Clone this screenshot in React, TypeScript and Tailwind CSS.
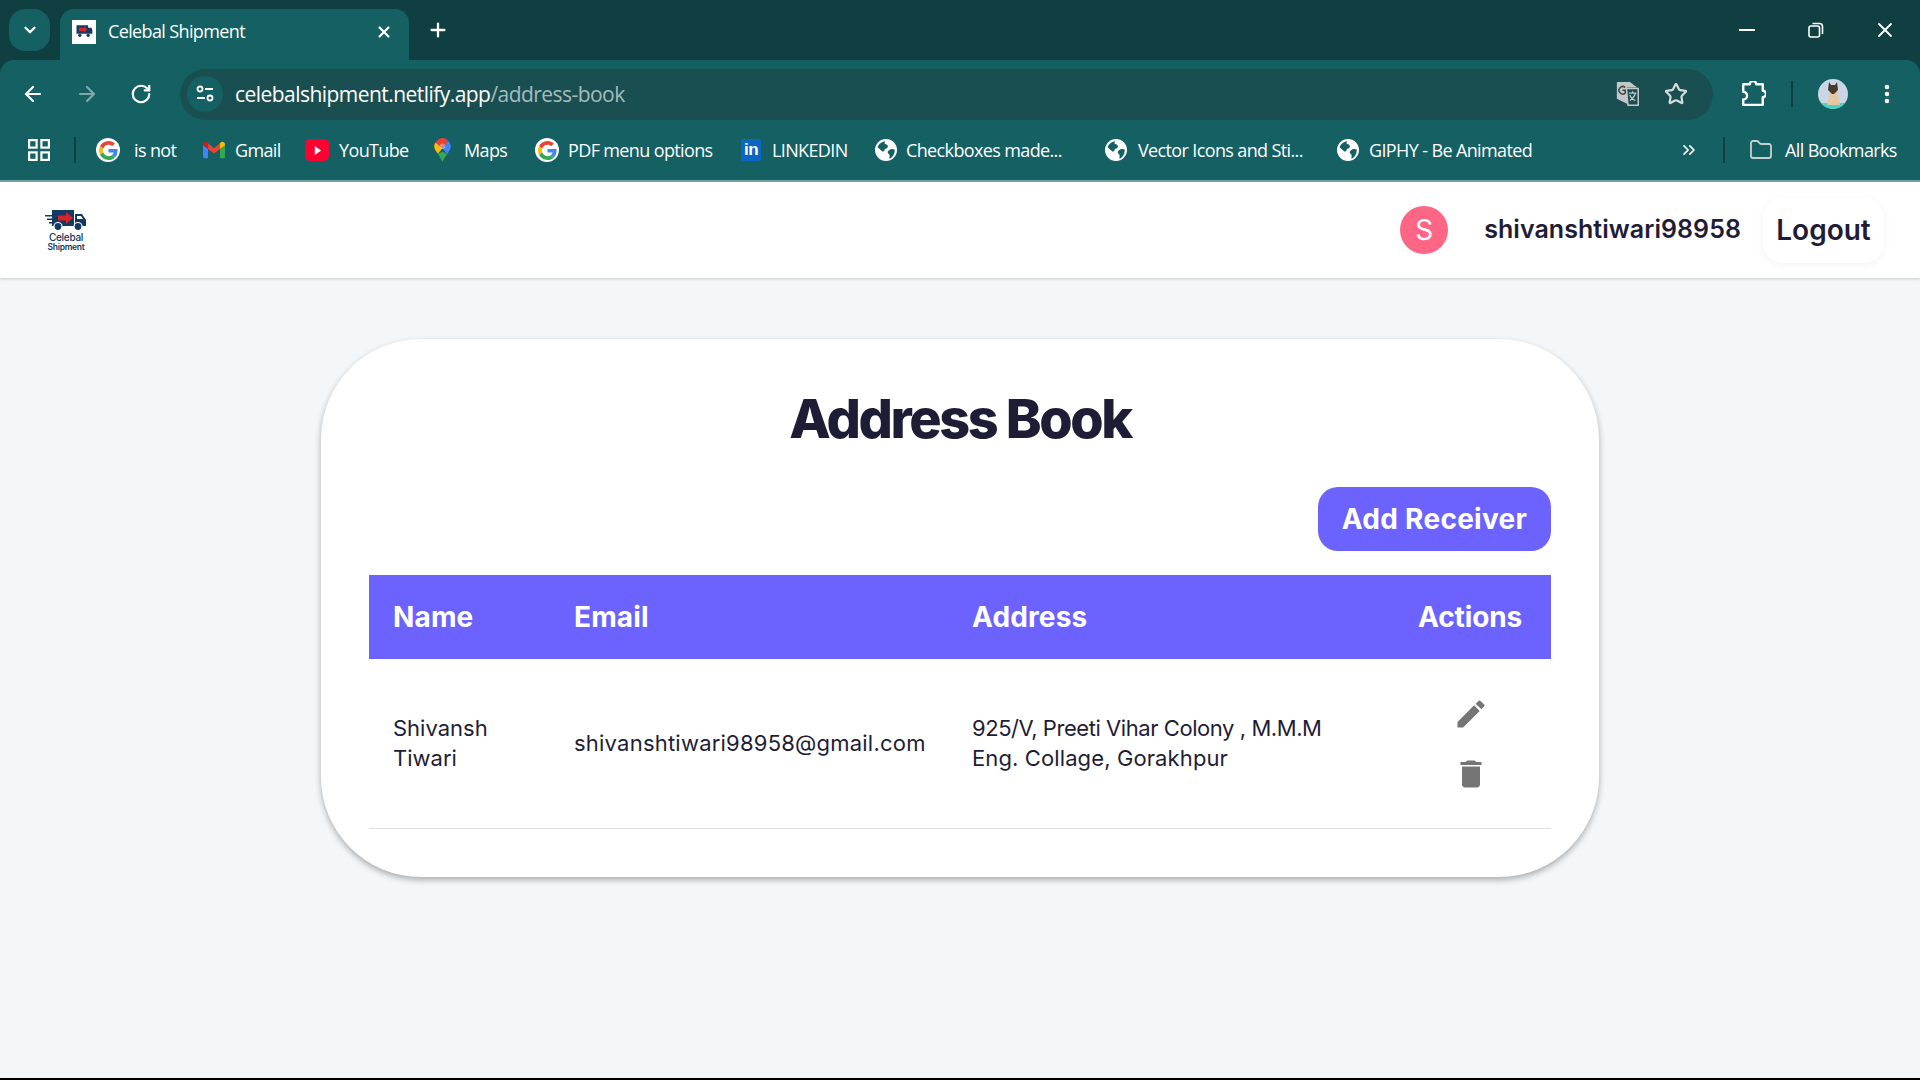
import { ArrowLeft, ArrowRight, ChevronDown, ChevronsRight, Folder, MoreVertical, Plus, RotateCw, Star, X } from "lucide-react";

const uiFont = "[font-family:'Open_Sans','Noto_Sans',sans-serif]";

const GoogleIcon = () => (
  <span className="flex h-[24px] w-[24px] items-center justify-center rounded-full bg-white">
    <svg viewBox="0 0 48 48" className="h-[19px] w-[19px]">
      <path fill="#EA4335" d="M24 9.5c3.5 0 6.700 1.200 9.200 3.600l6.900-6.900C35.900 2.400 30.500 0 24 0 14.600 0 6.500 5.400 2.600 13.200l8 6.200C12.500 13.700 17.800 9.500 24 9.500z" />
      <path fill="#4285F4" d="M46.900 24.500c0-1.600-.1-3.100-.4-4.500H24v9h12.900c-.6 3-2.200 5.500-4.700 7.200l7.700 6c4.500-4.200 7-10.300 7-17.700z" />
      <path fill="#FBBC05" d="M10.500 28.600c-.5-1.500-.8-3-.8-4.600s.3-3.100.8-4.600l-8-6.200C.9 16.500 0 20.100 0 24s.9 7.500 2.600 10.800l7.900-6.200z" />
      <path fill="#34A853" d="M24 48c6.500 0 11.900-2.100 15.900-5.800l-7.700-6c-2.200 1.400-4.900 2.300-8.200 2.300-6.200 0-11.500-4.200-13.400-9.900l-8 6.200C6.500 42.600 14.600 48 24 48z" />
    </svg>
  </span>
);

const GmailIcon = () => (
  <svg viewBox="0 0 24 18" className="h-[18px] w-[22px]">
    <path fill="#4285F4" d="M0 3v13.500A1.500 1.500 0 0 0 1.500 18H5.500V8z" />
    <path fill="#34A853" d="M18.500 8v10h4a1.500 1.500 0 0 0 1.500-1.500V3z" />
    <path fill="#EA4335" d="M5.500 8V1.500L12 7l6.500-5.500V8L12 13z" />
    <path fill="#C5221F" d="M0 3c0-2.500 3-3.800 4.800-2.200L5.500 1.500V8L0 3.800z" />
    <path fill="#FBBC04" d="M18.500 1.500l.7-.7C21 -.8 24 .5 24 3v.8L18.500 8z" />
  </svg>
);

const YoutubeIcon = () => (
  <span className="flex h-[22px] w-[24px] items-center justify-center rounded-[5px] bg-[#ff0033]">
    <svg viewBox="0 0 10 10" className="h-[9px] w-[9px]">
      <path fill="#fff" d="M2 0l7 5-7 5z" />
    </svg>
  </span>
);

const MapsIcon = () => (
  <svg viewBox="0 0 18 26" className="h-[24px] w-[17px]">
    <path fill="#34A853" d="M4 17l5 9c1-3.500 3-5.500 5-8.500L9 15z" />
    <path fill="#FBBC04" d="M1.500 5C.5 6.300 0 7.500 0 9c0 3 2 5.500 4 8l5-6z" />
    <path fill="#EA4335" d="M9 0C6 0 3.300 1.800 1.500 5L9 11l6-8C13.500 1 11.500 0 9 0z" />
    <path fill="#4285F4" d="M15 3L9 11l5 6.500C16 14.500 18 12.500 18 9c0-2.300-1.200-4.500-3-6z" />
    <circle cx="9" cy="9" r="3" fill="#fff" opacity="0.35" />
  </svg>
);

const LinkedinIcon = () => (
  <span className="flex h-[22px] w-[20px] items-end justify-center rounded-[2px] bg-[#0a66c2] pb-[2px] [font-family:'Liberation_Sans',sans-serif] text-[17px] leading-[18px] font-bold text-white">
    in
  </span>
);

const GlobeIcon = () => (
  <svg viewBox="0 0 24 24" className="h-[22px] w-[22px]">
    <circle cx="12" cy="12" r="12" fill="#fff" />
    <path fill="#146063" d="M11 2.500C7 3 4 5.500 2.800 9l5.200 4.500c1.500.5 2.500-.5 2.500-2 0-1 1.500-1 2.500-1.500s1.500-2.500.5-3.500-2.500-.5-3-1.500.5-1.500.5-2.500z" />
    <path fill="#146063" d="M21.500 11.500c-1.500-.5-3.500-1-5 0s-3 2-2.500 3.500 2 1.500 2 3-.5 2.500 0 3.500c3-1.500 5.500-5 5.500-9z" />
  </svg>
);

const bookmarks = [
  { label: "is not", icon: <GoogleIcon />, box: "w-[107px]", gap: "ml-[14px]" },
  { label: "Gmail", icon: <GmailIcon />, box: "w-[102px]", gap: "ml-[10px]" },
  { label: "YouTube", icon: <YoutubeIcon />, box: "w-[129px]", gap: "ml-[10px]" },
  { label: "Maps", icon: <MapsIcon />, box: "w-[101px]", gap: "ml-[13px]" },
  { label: "PDF menu options", icon: <GoogleIcon />, box: "w-[206px]", gap: "ml-[9px]" },
  { label: "LINKEDIN", icon: <LinkedinIcon />, box: "w-[134px]", gap: "ml-[11px]" },
  { label: "Checkboxes made...", icon: <GlobeIcon />, box: "w-[230px]", gap: "ml-[9px]" },
  { label: "Vector Icons and Sti...", icon: <GlobeIcon />, box: "w-[232px]", gap: "ml-[11px]" },
  { label: "GIPHY - Be Animated", icon: <GlobeIcon />, box: "w-[342px]", gap: "ml-[10px]" },
];

function BrowserChrome() {
  return (
    <div className={`${uiFont} shrink-0 bg-[#0f3f40] text-white`}>
      <div className="flex h-[60px] items-end pl-[9px]">
        <div className="mb-[9px] flex h-[42px] w-[41px] items-center justify-center rounded-[16px] bg-[#146063]">
          <ChevronDown size={18} strokeWidth={3} />
        </div>
        <div className="ml-[10px] flex h-[51px] w-[349px] items-center rounded-t-[14px] bg-[#146063] pb-[6px] pl-[12px] pr-[16px]">
          <span className="flex h-[24px] w-[24px] items-center justify-center bg-white">
            <svg viewBox="0 0 24 24" className="h-[20px] w-[20px]">
              <path fill="#123a63" d="M3 4h14v10H3zM17 7h4l1 3v4h-5z" />
              <path fill="#d8232a" d="M6 7h6V5l4 4-4 4v-2H6z" />
              <circle cx="7" cy="16" r="2" fill="#123a63" />
              <circle cx="17" cy="16" r="2" fill="#123a63" />
            </svg>
          </span>
          <span className="ml-[12px] flex-1 text-[18px] tracking-[-0.035em]">Celebal Shipment</span>
          <X size={18} strokeWidth={3} />
        </div>
        <Plus size={22} strokeWidth={2.5} className="mb-[19px] ml-[18px]" />
        <div className="mb-[18px] ml-auto flex items-center">
          <div className="h-[2px] w-[16px] bg-white" />
          <svg viewBox="0 0 16 16" className="ml-[53px] h-[16px] w-[16px]" fill="none" stroke="#fff" strokeWidth="1.6">
            <rect x="1" y="4" width="10.500" height="11" rx="2" />
            <path d="M4.500 1.500h7a3 3 0 0 1 3 3v7.500" />
          </svg>
          <X size={24} strokeWidth={1.8} className="ml-[49px] mr-[23px]" />
        </div>
      </div>

      <div className="rounded-t-[14px] bg-[#146063]">
        <div className="flex h-[68px] items-center">
          <ArrowLeft size={24} strokeWidth={2.2} className="ml-[21px]" />
          <ArrowRight size={24} strokeWidth={2.2} className="ml-[30px] text-[#7fa8a9]" />
          <RotateCw size={22} strokeWidth={2.4} className="ml-[31px]" />
          <div className="ml-[28px] flex h-[51px] w-[1533px] shrink-0 items-center rounded-full bg-[#1a4f52] pl-[7px] pr-[25px]">
            <span className="flex h-[36px] w-[36px] items-center justify-center rounded-full bg-[#146063]">
              <svg viewBox="0 0 20 20" className="h-[20px] w-[20px]" fill="none" stroke="#fff" strokeWidth="1.8">
                <circle cx="5" cy="5" r="2.500" />
                <path d="M10 5h8M2 14h8" />
                <circle cx="15" cy="14" r="2.500" />
              </svg>
            </span>
            <span className="ml-[12px] flex-1 pt-[1px] text-[21px] tracking-[-0.026em]">
              celebalshipment.netlify.app<span className="text-[#a4bcbd]">/address-book</span>
            </span>
            <svg viewBox="0 0 26 28" className="h-[26px] w-[26px]">
              <path fill="#c4c7c7" d="M1 1h14l8 6v0H12l1 18-12-6z" />
              <path fill="none" stroke="#c4c7c7" strokeWidth="1.600" d="M11 8h13v18H13z" />
              <path fill="none" stroke="#444" strokeWidth="1.600" d="M10 7a4 4 0 1 0 0 6V10H7" />
              <path fill="none" stroke="#c4c7c7" strokeWidth="1.400" d="M14 13h8M18 11v2M21 13c-1 4-3 6-6 8M15 15c1 3 3 5 6 6" />
            </svg>
            <Star size={24} strokeWidth={2.2} className="ml-[23px] text-[#d5dcdc]" />
          </div>
          <svg viewBox="0 0 24 24" className="ml-[27px] h-[26px] w-[26px] shrink-0" fill="none" stroke="#fff" strokeWidth="2.200" strokeLinejoin="round">
            <path d="M3 3h6a3 3 0 0 1 6 0h6v6a3 3 0 0 1 0 6v7H3v-5a3.500 3.500 0 0 0 0-7z" />
          </svg>
          <div className="ml-[25px] h-[26px] w-[2px] shrink-0 bg-[#0f3f40]" />
          <span className="relative ml-[25px] h-[30px] w-[30px] shrink-0 overflow-hidden rounded-full bg-[#c9d6e6]">
            <span className="absolute inset-x-0 bottom-0 h-[6px] bg-[#48d1c4]" />
            <svg viewBox="0 0 30 30" className="absolute inset-0 h-full w-full">
              <path fill="#e3c9a3" d="M12 12h7l3 14H9z" />
              <path fill="#4a3a2c" d="M11 3l2 3h4l2-3 1 8-4 4h-2l-4-4z" />
            </svg>
          </span>
          <MoreVertical size={24} strokeWidth={2.6} className="ml-[27px] shrink-0" />
        </div>

        <div className="flex h-[54px] items-center border-b-2 border-[#7aa0a1] pb-[8px] text-[18px] tracking-[-0.035em]">
          <svg viewBox="0 0 22 22" className="ml-[28px] h-[22px] w-[22px]" fill="none" stroke="#fff" strokeWidth="2.200">
            <rect x="1.100" y="1.100" width="7.500" height="7.500" />
            <rect x="13.400" y="1.100" width="7.500" height="7.500" />
            <rect x="1.100" y="13.400" width="7.500" height="7.500" />
            <rect x="13.400" y="13.400" width="7.500" height="7.500" />
          </svg>
          <div className="ml-[24px] mr-[20px] h-[26px] w-[2px] bg-[#0f3f40]" />
          {bookmarks.map((item) => (
            <div key={item.label + item.box} className={`flex shrink-0 items-center ${item.box}`}>
              {item.icon}
              <span className={`whitespace-nowrap ${item.gap}`}>{item.label}</span>
            </div>
          ))}
          <ChevronsRight size={20} strokeWidth={2} className="shrink-0" />
          <div className="ml-[24px] h-[26px] w-[2px] shrink-0 bg-[#0f3f40]" />
          <Folder size={24} strokeWidth={1.8} className="ml-[24px] shrink-0 text-[#c4d0d0]" />
          <span className="ml-[12px] whitespace-nowrap">All Bookmarks</span>
        </div>
      </div>
    </div>
  );
}

function Logo() {
  return (
    <div className="flex w-[42px] flex-col items-center">
      <svg viewBox="0 0 42 22" className="h-[22px] w-[42px]">
        <path fill="#123a63" d="M7 1h22v16H7zM30 5h7l4 6v6H30z" />
        <path fill="#123a63" d="M0 6h7v1.500H0zM2 9.500h5v1.500H2zM4 13h3v1.500H4z" />
        <path fill="#d8232a" d="M13 6.500h8V3l7 6-7 6v-3.500h-8z" />
        <path fill="#fff" d="M32 7h4l2 3h-6z" />
        <circle cx="13" cy="17.500" r="4" fill="#123a63" stroke="#fff" strokeWidth="1.200" />
        <circle cx="33" cy="17.500" r="4" fill="#123a63" stroke="#fff" strokeWidth="1.200" />
      </svg>
      <span className="mt-[1px] [font-family:'Inter',sans-serif] text-[10px] leading-[10px] font-medium tracking-[-0.03em] text-[#123a63]">Celebal</span>
      <span className="[font-family:'Inter',sans-serif] text-[8.500px] leading-[10px] font-semibold tracking-[-0.03em] text-[#123a63]">Shipment</span>
    </div>
  );
}

function Header() {
  return (
    <header className="z-10 flex h-[96px] shrink-0 items-center bg-white pl-[45px] pr-[36px] shadow-[0_1px_3px_rgba(0,0,0,0.18)]">
      <Logo />
      <div className="ml-auto flex h-[48px] w-[48px] items-center justify-center rounded-full bg-[#ff6584] text-[28px] text-white">S</div>
      <span className="ml-[36px] text-[25px] font-semibold tracking-[0.002em] text-[#1f1d36]">shivanshtiwari98958</span>
      <button className="ml-[22px] flex h-[65px] w-[121px] items-center justify-center rounded-[20px] bg-white text-[28px] font-semibold text-[#1f1d36] shadow-[0_2px_8px_rgba(0,0,0,0.05)]">
        Logout
      </button>
    </header>
  );
}

function AddressBook() {
  return (
    <section className="w-[1278px] rounded-[100px] bg-white px-[48px] pb-[48px] pt-[49px] shadow-[0_3px_6px_rgba(0,0,0,0.3)]">
      <h1 className="mb-[37px] text-center text-[54px] leading-[62px] font-extrabold tracking-[-0.045em] text-[#1f1d36]">Address Book</h1>
      <div className="mb-[24px] flex justify-end">
        <button className="h-[64px] w-[233px] rounded-[20px] bg-[#6c63ff] text-[28px] font-bold tracking-[0.01em] text-white">Add Receiver</button>
      </div>
      <table className="w-full table-fixed border-collapse">
        <colgroup>
          <col className="w-[181px]" />
          <col className="w-[398px]" />
          <col className="w-[447px]" />
          <col />
        </colgroup>
        <thead>
          <tr className="h-[84px] bg-[#6c63ff] text-left text-[28px] font-black tracking-[0.005em] text-white">
            <th className="pl-[24px]">Name</th>
            <th className="pl-[24px]">Email</th>
            <th className="pl-[24px]">Address</th>
            <th className="pr-[29px] text-right tracking-[-0.005em]">Actions</th>
          </tr>
        </thead>
        <tbody>
          <tr className="h-[169px] border-b border-[#e0e0e0] text-[22px] leading-[30px] text-[#1f1d36]">
            <td className="pl-[24px]">
              Shivansh
              <br />
              Tiwari
            </td>
            <td className="pl-[24px] whitespace-nowrap tracking-[0.01em]">shivanshtiwari98958@gmail.com</td>
            <td className="pl-[24px] tracking-[-0.02em]">
              925/V, Preeti Vihar Colony , M.M.M
              <br />
              <span className="tracking-[0.005em]">Eng. Collage, Gorakhpur</span>
            </td>
            <td className="pr-[5px]">
              <div className="flex flex-col items-center gap-[24px] pt-[2px]">
                <svg viewBox="0 0 24 24" className="h-[36px] w-[36px]" fill="#757575">
                  <path d="M3 17.250V21h3.750L17.810 9.940l-3.750-3.750L3 17.250zM20.710 7.040c.39-.39.39-1.020 0-1.410l-2.340-2.340a.996.996 0 0 0-1.410 0l-1.830 1.830 3.750 3.750 1.830-1.830z" />
                </svg>
                <svg viewBox="0 0 24 24" className="h-[36px] w-[36px]" fill="#757575">
                  <path d="M6 19c0 1.100.9 2 2 2h8c1.100 0 2-.9 2-2V7H6v12zM19 4h-3.500l-1-1h-5l-1 1H5v2h14V4z" />
                </svg>
              </div>
            </td>
          </tr>
        </tbody>
      </table>
    </section>
  );
}

export default function App() {
  return (
    <div className="flex h-screen flex-col overflow-hidden bg-black pb-[2px] [font-family:'Inter',sans-serif]">
      <BrowserChrome />
      <Header />
      <main className="flex flex-1 items-start justify-center bg-[#f3f7fa] pt-[61px]">
        <AddressBook />
      </main>
    </div>
  );
}
